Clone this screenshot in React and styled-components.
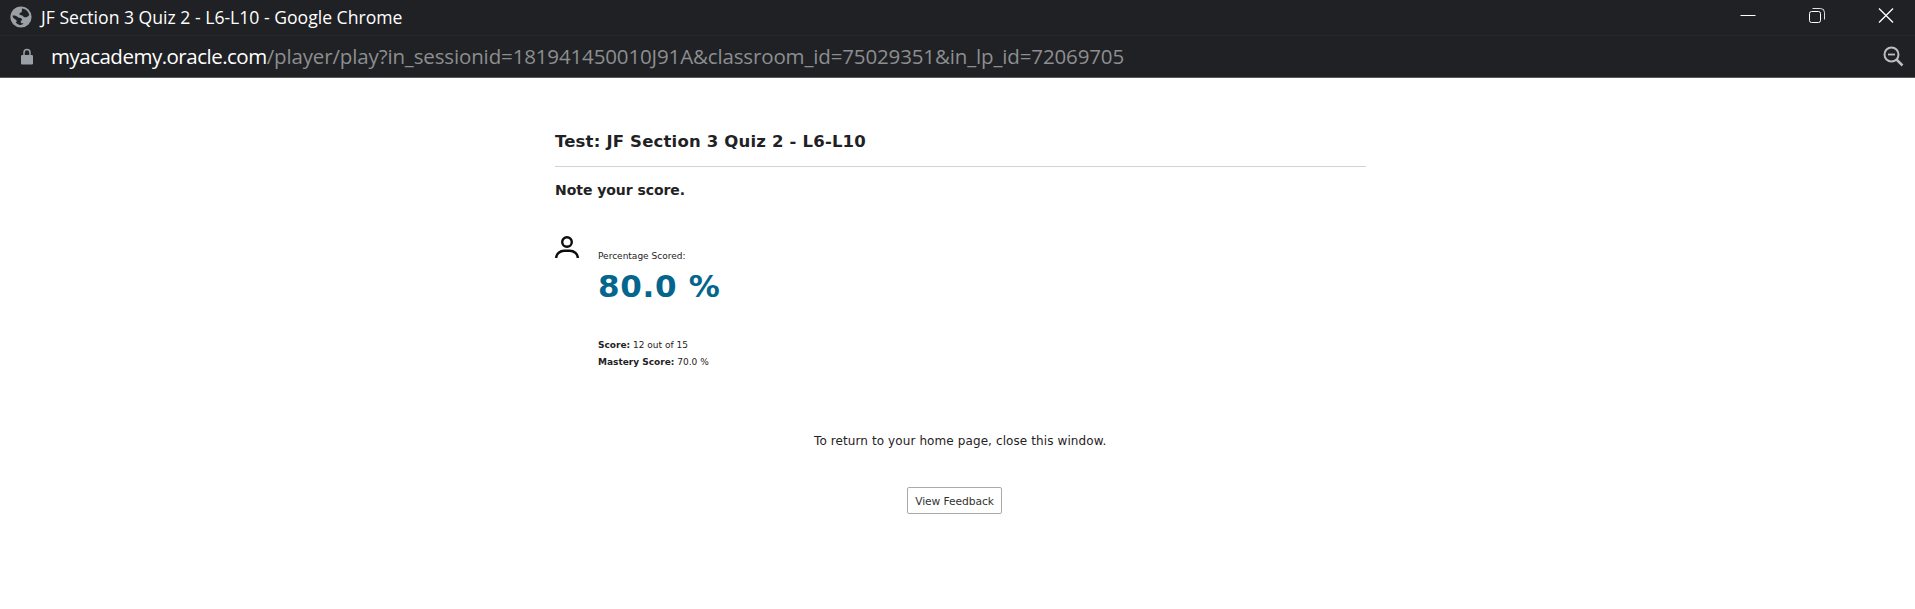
import React from 'react';
import styled, { createGlobalStyle } from 'styled-components';

const GlobalStyle = createGlobalStyle`
  * { box-sizing: border-box; }
  body { margin: 0; background: #fff; }
`;

const Window = styled.div`
  display: flex;
  flex-direction: column;
  height: 609px;
  overflow: hidden;
`;

const Chrome = styled.header`
  background: #202124;
  font-family: "Open Sans", "Noto Sans", sans-serif;
  border-bottom: 1px solid #5b5b5e;
  height: 78px;
`;

const TitleBar = styled.div`
  display: flex;
  align-items: flex-start;
  height: 36px;
  padding: 5px 21px 0 10px;
  border-bottom: 1px solid #27282c;
`;

const WindowTitle = styled.span`
  flex: 1;
  margin-left: 9px;
  font-size: 17.6px;
  line-height: 24px;
  letter-spacing: 0;
  color: #fff;
  white-space: pre;
`;

const Controls = styled.div`
  display: flex;
  gap: 53px;
  margin-top: 2px;
`;

const AddressBar = styled.div`
  display: flex;
  align-items: center;
  height: 41px;
  padding: 0 11px 0 20px;
`;

const Address = styled.div`
  flex: 1;
  margin: -2px 0 0 17px;
  font-size: 20.5px;
  line-height: 28px;
  color: #8d8e90;
  letter-spacing: -0.14px;
  white-space: pre;
`;

const Host = styled.span`
  color: #fff;
  letter-spacing: -0.5px;
`;

const Page = styled.main`
  width: 811px;
  margin-left: 555px;
  padding-top: 52px;
  color: #1f2224;
  font-family: "DejaVu Sans", Verdana, sans-serif;
  white-space: nowrap;
`;

const Heading = styled.h1`
  margin: 0;
  height: 37px;
  border-bottom: 1px solid #d3d3d3;
  font-size: 16.5px;
  line-height: 24px;
  letter-spacing: 0.18px;
`;

const Subheading = styled.h2`
  margin: 13px 0 0;
  font-size: 14px;
  line-height: 20px;
  letter-spacing: -0.05px;
`;

const Result = styled.section`
  display: flex;
  gap: 19px;
  margin-top: 35px;
`;

const Details = styled.div`
  padding-top: 14px;
  font-size: 9px;
`;

const Label = styled.div`
  line-height: 14px;
`;

const Percentage = styled.div`
  margin: 5px 0 33px;
  font-size: 31px;
  font-weight: 700;
  line-height: 36px;
  letter-spacing: 0.7px;
  color: #04668f;
`;

const ScoreLine = styled.div`
  line-height: 17px;
`;

const Footer = styled.footer`
  display: flex;
  flex-direction: column;
  align-items: flex-start;
  padding-left: 259px;
`;

const Notice = styled.p`
  margin: 61px 0 37px;
  font-size: 12px;
  line-height: 18px;
  letter-spacing: 0.1px;
`;

const FeedbackButton = styled.button`
  width: 95px;
  height: 27px;
  margin-left: 93px;
  padding: 2px 0 0 0;
  border: 1px solid #a9a9a9;
  border-radius: 2px;
  background: #fff;
  color: #333;
  font: 10.7px/22px "DejaVu Sans", Verdana, sans-serif;
  letter-spacing: -0.08px;
  white-space: nowrap;
`;

const GlobeIcon = styled.svg`
  margin-top: 1px;
`;

const Globe = () => (
  <GlobeIcon width="22" height="22" viewBox="0 0 22 22">
    <circle cx="11" cy="11" r="10.6" fill="#9aa0a6" />
    <path
      d="M12 2.600c3.700.4 6.400 3 7.300 6.400-1.400 1.800-2.800 2.600-4.700 2.300-1.200-.2-1.200-1.500-2.400-1.900-1.300-.4-2.700.1-2.800-1.300-.1-1.300 1.800-1.200 2.400-2.300.5-1-.2-1.900.2-3.200z"
      fill="#202124"
    />
    <path
      d="M2.500 9.500c2.200-.4 4 .3 5.500 1.700 1.200 1 3.400.2 3.900 1.700.5 1.600-1.500 2-1.300 3.400.1 1 1.500 1.100 2.900 1.200-.8 1-2.100 1.600-3.800 1.400-1.600-.4-2.900-1.200-4-2.300 1.200-.4 1.300-1.500.5-2.500-1.100-1.300-3.300-1.300-3.700-4.600z"
      fill="#202124"
    />
  </GlobeIcon>
);

const Lock = () => (
  <svg width="14" height="18" viewBox="0 0 14 18">
    <rect x="1" y="7" width="12" height="9.5" rx="1.2" fill="#9aa0a6" />
    <path d="M4 7.500V4.500a3 3 0 0 1 6 0v3" fill="none" stroke="#9aa0a6" strokeWidth="1.5" />
  </svg>
);

const Minimize = () => (
  <svg width="16" height="16" viewBox="0 0 16 16">
    <path d="M0.500 8.500h15" stroke="#fff" />
  </svg>
);

const Restore = () => (
  <svg width="16" height="16" viewBox="0 0 16 16" fill="none" stroke="#fff">
    <rect x="0.5" y="4.5" width="11" height="11" rx="2" />
    <path d="M3.500 1.500h8a4 4 0 0 1 4 4v7" strokeOpacity=".85" />
  </svg>
);

const Close = () => (
  <svg width="16" height="16" viewBox="0 0 16 16">
    <path d="M1 1.500l14 14M15 1.500l-14 14" stroke="#fff" strokeWidth="1.3" />
  </svg>
);

const ZoomOut = () => (
  <svg width="21" height="21" viewBox="0 0 21 21" fill="none" stroke="#bdbdbd">
    <circle cx="8.5" cy="8.5" r="7" strokeWidth="2" />
    <path d="M5 8.500h7" strokeWidth="1.8" />
    <path d="M13.500 13.500l6 6" strokeWidth="2.5" />
  </svg>
);

const Person = () => (
  <svg width="24" height="24" viewBox="0 0 24 24" fill="none" stroke="#0c0c0c" strokeWidth="2.4">
    <circle cx="12" cy="7" r="4.8" />
    <path d="M1.200 23c0-4.200 4-7.300 8-7.300h5.600c4 0 8 3.100 8 7.300" />
  </svg>
);

export default function App() {
  return (
    <Window>
      <GlobalStyle />
      <Chrome>
        <TitleBar>
          <Globe />
          <WindowTitle>JF Section 3 Quiz 2 - L6-L10 - Google Chrome</WindowTitle>
          <Controls>
            <Minimize />
            <Restore />
            <Close />
          </Controls>
        </TitleBar>
        <AddressBar>
          <Lock />
          <Address>
            <Host>myacademy.oracle.com</Host>
            /player/play?in_sessionid=181941450010J91A&amp;classroom_id=75029351&amp;in_lp_id=72069705
          </Address>
          <ZoomOut />
        </AddressBar>
      </Chrome>
      <Page>
        <Heading>Test: JF Section 3 Quiz 2 - L6-L10</Heading>
        <Subheading>Note your score.</Subheading>
        <Result>
          <Person />
          <Details>
            <Label>Percentage Scored:</Label>
            <Percentage>80.0 %</Percentage>
            <ScoreLine><b>Score:</b> 12 out of 15</ScoreLine>
            <ScoreLine><b>Mastery Score:</b> 70.0 %</ScoreLine>
          </Details>
        </Result>
        <Footer>
          <Notice>To return to your home page, close this window.</Notice>
          <FeedbackButton>View Feedback</FeedbackButton>
        </Footer>
      </Page>
    </Window>
  );
}
